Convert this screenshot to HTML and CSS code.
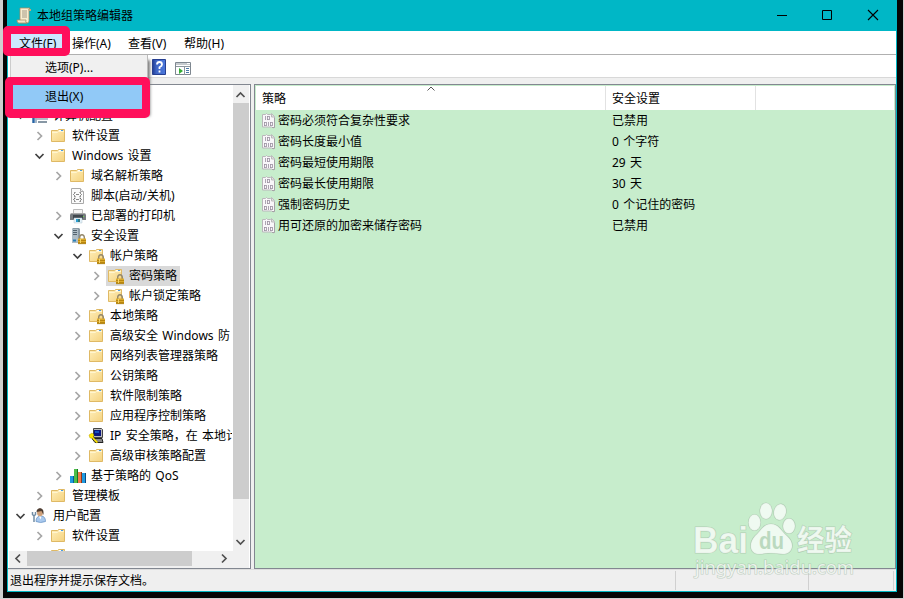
FILE: index.html
```html
<!DOCTYPE html>
<html lang="zh-CN">
<head>
<meta charset="utf-8">
<title>本地组策略编辑器</title>
<link rel="stylesheet" href="styles.css">
</head>
<body>
<svg class="defs" width="0" height="0">
  <defs>
    <linearGradient id="fg" x1="0" y1="0" x2="1" y2="1"><stop offset="0" stop-color="#ffefba"/><stop offset="1" stop-color="#f4d27f"/></linearGradient>
    <linearGradient id="help" x1="0" y1="0" x2="1" y2="0"><stop offset="0" stop-color="#203c94"/><stop offset=".3" stop-color="#3f65c4"/><stop offset="1" stop-color="#4b78dc"/></linearGradient>
    <symbol id="folder" viewBox="0 0 18 18"><path d="M1.500 14.500v-11h6l1-1h6v12z" fill="url(#fg)" stroke="#dfb965"/><path d="M2 5.500h5.500l1-1H14" fill="none" stroke="#fff5d0"/><path d="M9 3.500h4" stroke="#fff"/><path d="M11 3.500h2" stroke="#4a9be0"/></symbol>
    <symbol id="lock" viewBox="0 0 18 18"><path d="M10.700 12v-1.500a2.300 2.800 0 0 1 4.600 0V12" fill="none" stroke="#93876a" stroke-width="1.400"/><path d="M9 11.500h8V17H9z" fill="#dcab2c"/><path d="M9 13.500h8M9 15.500h8" stroke="#b9860f"/><path d="M9 16.700h8" stroke="#8f6a14" stroke-width=".6"/><path d="M11.500 12v4" stroke="#f6d667"/></symbol>
    <symbol id="flock" viewBox="0 0 18 18"><use href="#folder"/><use href="#lock"/></symbol>
    <symbol id="script" viewBox="0 0 18 18"><path d="M2.500 1.500h9l3 3v12h-12z" fill="#fbfbfb" stroke="#aaa"/><path d="M11.500 1.500v3h3" fill="#eee" stroke="#aaa"/><path d="M6.500 5.500h-1v1l-1 1 1 1v1h1M10.500 5.500h1v1l1 1-1 1v1h-1M6.500 11h-1v1l-1 .5 1 1v1h1M10.500 11h1v1l1 .5-1 1v1h-1" fill="none" stroke="#666" stroke-width=".9"/><path d="M7 7.500h3M7 12.500h3" stroke="#888"/></symbol>
    <symbol id="printer" viewBox="0 0 18 18"><path d="M4.500 2.500h9V7h-9z" fill="#f5f5f5" stroke="#bbb"/><path d="M2 6h14l1 2v5H1V8z" fill="#777c80"/><path d="M2 6.500h14" stroke="#aaa"/><path d="M4 8h10v4H4z" fill="#40474d"/><path d="M5 11h8v5H5z" fill="#e4f2fa" stroke="#b5c6cf" stroke-width=".5"/><path d="M7 12h2v3H7z" fill="#2a9dd1"/><path d="M9 12h2v3H9z" fill="#367b83"/><path d="M14 9.500h1" stroke="#69e049"/></symbol>
    <symbol id="server" viewBox="0 0 18 18"><path d="M3 2l1-1h6l1 1v14H3z" fill="#8b9aa5"/><path d="M3 2h6v14H3z" fill="#aebcc5"/><path d="M4 3.500h4M4 5.500h4M4 7.500h4" stroke="#53636e"/><path d="M4 13.500h3" stroke="#277fb8" stroke-width="2"/><use href="#lock"/></symbol>
    <symbol id="qos" viewBox="0 0 18 18"><path d="M1 9h3v7H1z" fill="#1f9ae0"/><path d="M4 9h1v7H4z" fill="#075a9a"/><path d="M5 2h3v14H5z" fill="#4cbd49"/><path d="M8 2h1v14H8z" fill="#167821"/><path d="M9 5h3v11H9z" fill="#f07b4c"/><path d="M12 5h1v11h-1z" fill="#933719"/><path d="M13 6h3v10h-3z" fill="#1f9ae0"/><path d="M16 6h1v10h-1z" fill="#064a83"/></symbol>
    <symbol id="ipsec" viewBox="0 0 18 18"><path d="M5.500 1.500h8l1 1v8h-9z" fill="#bcbcbc" stroke="#444"/><path d="M6 3h7v6H6z" fill="#0b177e"/><path d="M7 5h4" stroke="#268dff"/><path d="M4 11.500h10l1 4H7z" fill="#888" stroke="#222"/><path d="M1 8l3-2 2 2-1 2 5 5-1.500 1L4 11 2 11z" fill="#ffea00" stroke="#b89e00" stroke-width=".5"/></symbol>
    <symbol id="computer" viewBox="0 0 18 18"><path d="M1 5h5v11H1z" fill="#a6b8c9"/><path d="M2.500 8v8" stroke="#2465aa" stroke-width="2"/><path d="M6 4h11v9H6z" fill="#b5bfc9"/><path d="M8 5h8v6H8z" fill="#dce9f3"/><path d="M7 15h9" stroke="#8898a5" stroke-width="2"/></symbol>
    <symbol id="user" viewBox="0 0 18 18"><path d="M5 14.500c0-4 2-5.500 5-5.500s4.500 2 4.500 5.500q-5 2-9.500 0z" fill="#a9c9ee" stroke="#5e8dc0" stroke-width=".7"/><ellipse cx="9" cy="5.500" rx="3" ry="3.800" fill="#cfa17b"/><path d="M5.500 5c0-5 7-5 7 0v3l-2-4z" fill="#4d3d32"/><path d="M1.500 5v2.500L3 9l1.500-1.500V5M3 9v6" fill="none" stroke="#718da5" stroke-width="1.500"/><path d="M8 9.500l1.500 3 1-3" fill="#fff"/></symbol>
    <symbol id="policy" viewBox="0 0 14 16"><path d="M.5 1.500h3l1-1 1 1h3l1-1 3 3V14l-1 1-2-1H.500z" fill="#f8f6f9" stroke="#bab7bb"/><path d="M9.500 1v3h3" fill="#ddd" stroke="#bbb"/><path d="M12.500 5v9.500H10" fill="none" stroke="#a5a2a6"/><g fill="none" stroke="#9990a0" stroke-width=".8"><path d="M3.500 3v4M6.500 9v4"/><rect x="5.500" y="3.400" width="2" height="3.200"/><rect x="2.500" y="9.400" width="2" height="3.200"/><rect x="8.500" y="9.400" width="2" height="3.200"/></g></symbol>
    <symbol id="right" viewBox="0 0 12 12"><path d="M4.500 2l4 4-4 4" fill="none" stroke="#a6a6a6" stroke-width="1.700"/></symbol>
    <symbol id="down" viewBox="0 0 12 12"><path d="M2.500 4l4 4 4-4" fill="none" stroke="#404040" stroke-width="1.700"/></symbol>
  </defs>
</svg>
<div class="window">
  <header class="titlebar">
    <svg class="appicon" viewBox="0 0 16 17"><path d="M4 1h10q-2 1-1 3v10q0 2-2 2H2q2-1 2-3z" fill="#f7edcf" stroke="#a58b62" stroke-width=".8"/><path d="M6 4h5M6 6h5M6 8h5M6 10h5" stroke="#a49a87"/><path d="M1 13h9q-1 3 1 3H3q-2 0-2-3z" fill="#f2e6c6" stroke="#a98f67" stroke-width=".8"/><path d="M13 2h2v2h-2" fill="#c6aa76"/></svg>
    <h1>本地组策略编辑器</h1>
    <svg class="controls" viewBox="0 0 104 12"><path d="M1 6.500h10" stroke="#000"/><path d="M46.500 1.500h9v9h-9z" fill="none" stroke="#000"/><path d="M92 1l10 10M102 1L92 11" fill="none" stroke="#000" stroke-width="1.100"/></svg>
  </header>
  <nav class="menubar"><span class="open">文件(F)</span><span>操作(A)</span><span>查看(V)</span><span>帮助(H)</span></nav>
  <div class="toolbar">
    <svg width="14" height="16" viewBox="0 0 14 16"><path d="M.5.500h13v15H.500z" fill="url(#help)" stroke="#263f91"/><path d="M5 5.500Q5 3 7.500 3T10 5.500Q10 7 7.500 8.300V10M7.500 11.500v2" fill="none" stroke="#fff" stroke-width="1.800"/></svg>
    <svg class="panel-icon" width="16" height="14" viewBox="0 0 16 14"><path d="M.5.500h15v12H.500z" fill="#fff" stroke="#7e8790"/><path d="M1 2h14M1 4.500h14M9.500 5v8" stroke="#8d969e"/><path d="M12 1.500h3" stroke="#fff"/><path d="M4 6l4 3-4 3z" fill="#35ad35"/><path d="M11 6.500h3M11 8.500h3M11 10.500h3" stroke="#4778a8"/></svg>
  </div>
  <main class="panes">
    <section class="left">
      <div class="treewrap">
        <div class="tree">
          <div class="row root"></div>
          <div class="row"><svg class="arrow"><use href="#down"/></svg><svg class="icon"><use href="#computer"/></svg><span>计算机配置</span></div>
          <div class="row l1"><svg class="arrow"><use href="#right"/></svg><svg class="icon"><use href="#folder"/></svg><span>软件设置</span></div>
          <div class="row l1"><svg class="arrow"><use href="#down"/></svg><svg class="icon"><use href="#folder"/></svg><span>Windows 设置</span></div>
          <div class="row l2"><svg class="arrow"><use href="#right"/></svg><svg class="icon"><use href="#folder"/></svg><span>域名解析策略</span></div>
          <div class="row l2"><i class="arrow"></i><svg class="icon"><use href="#script"/></svg><span>脚本(启动/关机)</span></div>
          <div class="row l2"><svg class="arrow"><use href="#right"/></svg><svg class="icon"><use href="#printer"/></svg><span>已部署的打印机</span></div>
          <div class="row l2"><svg class="arrow"><use href="#down"/></svg><svg class="icon"><use href="#server"/></svg><span>安全设置</span></div>
          <div class="row l3"><svg class="arrow"><use href="#down"/></svg><svg class="icon"><use href="#flock"/></svg><span>帐户策略</span></div>
          <div class="row l4 selected"><svg class="arrow"><use href="#right"/></svg><svg class="icon"><use href="#flock"/></svg><span>密码策略</span></div>
          <div class="row l4"><svg class="arrow"><use href="#right"/></svg><svg class="icon"><use href="#flock"/></svg><span>帐户锁定策略</span></div>
          <div class="row l3"><svg class="arrow"><use href="#right"/></svg><svg class="icon"><use href="#flock"/></svg><span>本地策略</span></div>
          <div class="row l3"><svg class="arrow"><use href="#right"/></svg><svg class="icon"><use href="#folder"/></svg><span>高级安全 Windows 防</span></div>
          <div class="row l3"><i class="arrow"></i><svg class="icon"><use href="#folder"/></svg><span>网络列表管理器策略</span></div>
          <div class="row l3"><svg class="arrow"><use href="#right"/></svg><svg class="icon"><use href="#folder"/></svg><span>公钥策略</span></div>
          <div class="row l3"><svg class="arrow"><use href="#right"/></svg><svg class="icon"><use href="#folder"/></svg><span>软件限制策略</span></div>
          <div class="row l3"><svg class="arrow"><use href="#right"/></svg><svg class="icon"><use href="#folder"/></svg><span>应用程序控制策略</span></div>
          <div class="row l3"><svg class="arrow"><use href="#right"/></svg><svg class="icon"><use href="#ipsec"/></svg><span>IP 安全策略，在 本地计</span></div>
          <div class="row l3"><svg class="arrow"><use href="#right"/></svg><svg class="icon"><use href="#folder"/></svg><span>高级审核策略配置</span></div>
          <div class="row l2"><svg class="arrow"><use href="#right"/></svg><svg class="icon"><use href="#qos"/></svg><span>基于策略的 QoS</span></div>
          <div class="row l1"><svg class="arrow"><use href="#right"/></svg><svg class="icon"><use href="#folder"/></svg><span>管理模板</span></div>
          <div class="row"><svg class="arrow"><use href="#down"/></svg><svg class="icon"><use href="#user"/></svg><span>用户配置</span></div>
          <div class="row l1"><svg class="arrow"><use href="#right"/></svg><svg class="icon"><use href="#folder"/></svg><span>软件设置</span></div>
          <div class="row l1"><i class="arrow"></i><svg class="icon"><use href="#folder"/></svg></div>
        </div>
        <div class="vscroll">
          <svg viewBox="0 0 16 18"><path d="M3.500 12l4-4 4 4" class="chev"/></svg>
          <div class="vthumb"></div>
          <svg viewBox="0 0 16 18"><path d="M3.500 7l4 4 4-4" class="chev"/></svg>
        </div>
      </div>
      <div class="hscroll">
        <svg viewBox="0 0 18 16"><path d="M11 3.500l-4 4 4 4" class="chev"/></svg>
        <div class="hthumb"></div>
        <svg viewBox="0 0 18 16"><path d="M8 3.500l4 4-4 4" class="chev"/></svg>
      </div>
    </section>
    <section class="right">
      <div class="head"><span>策略<svg class="sort" viewBox="0 0 8 5"><path d="M.5 4.500L4 1l3.500 3.500" fill="none" stroke="#555"/></svg></span><span>安全设置</span><span></span></div>
      <div class="item"><svg><use href="#policy"/></svg><span>密码必须符合复杂性要求</span><span>已禁用</span></div>
      <div class="item"><svg><use href="#policy"/></svg><span>密码长度最小值</span><span>0 个字符</span></div>
      <div class="item"><svg><use href="#policy"/></svg><span>密码最短使用期限</span><span>29 天</span></div>
      <div class="item"><svg><use href="#policy"/></svg><span>密码最长使用期限</span><span>30 天</span></div>
      <div class="item"><svg><use href="#policy"/></svg><span>强制密码历史</span><span>0 个记住的密码</span></div>
      <div class="item"><svg><use href="#policy"/></svg><span>用可还原的加密来储存密码</span><span>已禁用</span></div>
    </section>
  </main>
  <footer class="status"><span>退出程序并提示保存文档。</span><span></span><span></span></footer>
</div>
<div class="dropdown"><div>选项(P)...</div><div class="hot">退出(X)</div></div>
<div class="mark mark-file"></div>
<div class="mark mark-exit"></div>
<svg class="watermark" width="180" height="90" viewBox="685 495 180 90">
  <g class="wm">
    <text x="693" y="553" class="wm-bai" textLength="55" lengthAdjust="spacingAndGlyphs">Bai</text>
    <ellipse cx="754.500" cy="522.500" rx="6" ry="8"/><ellipse cx="766" cy="511" rx="6" ry="8"/><ellipse cx="780" cy="512" rx="6" ry="8" transform="rotate(12 780 512)"/><ellipse cx="789" cy="526" rx="6" ry="7.500"/>
    <path d="M771 524c8 0 10 7 16 12 9 8 5 18-4 18-5 0-7-1-12-1s-7 1-12 1c-9 0-11-10-4-18 6-5 8-12 16-12z"/>
    <text x="797" y="551" class="wm-cn" textLength="55" lengthAdjust="spacingAndGlyphs">经验</text>
    <text x="695" y="574" class="wm-url" textLength="159" lengthAdjust="spacingAndGlyphs">jingyan.baidu.com</text>
  </g>
  <text x="759" y="549" class="wm-du" textLength="25" lengthAdjust="spacingAndGlyphs">du</text>
</svg>
</body>
</html>
```

FILE: styles.css
```css
* { box-sizing: border-box; }
body {
  margin: 0;
  width: 904px;
  height: 599px;
  overflow: hidden;
  position: relative;
  background: #cfcfcf;
  padding: 0 1px 1px 3px;
  font: 12px/20px "Noto Sans", "Noto Sans CJK SC", sans-serif;
  word-spacing: 1.2px;
  color: #000;
}
.defs { position: absolute; }
svg { display: block; flex: none; }
.window {
  width: 900px;
  height: 598px;
  background: #efefef;
  border: solid #050505;
  border-width: 0 6px 6px 4px;
  box-shadow: inset 1px 0 #00b7c3, inset -1px -1px #00b7c3;
  padding: 0 1px 1px;
  display: flex;
  flex-direction: column;
}
.titlebar {
  height: 31px;
  margin: 0 -1px;
  flex: none;
  background: #00b7c6;
  display: flex;
  align-items: center;
  padding: 0 17px 0 9px;
}
.titlebar h1 { margin: 0 auto 0 5px; font-size: 12px; font-weight: 400; }
.appicon { width: 16px; height: 17px; }
.controls { width: 104px; height: 12px; margin-bottom: 1px; }
.menubar {
  height: 24px;
  flex: none;
  background: #fff;
  border-bottom: 1px solid #b0b0b0;
  display: flex;
  padding-left: 3px;
  line-height: 25px;
}
.menubar span { width: 56px; padding-left: 8px; white-space: nowrap; }
.menubar .open { width: 53px; background: #cce8ff; }
.toolbar {
  height: 23px;
  flex: none;
  background: #fff;
  border-bottom: 1px solid #d8d8d8;
  display: flex;
  gap: 9px;
  align-items: center;
  padding: 2px 0 0 144px;
}
.panel-icon { margin-top: 3px; }
.panes { display: flex; gap: 3px; height: 485px; margin-top: 6px; flex: none; }
.left {
  width: 243px;
  background: #fff;
  border: 1px solid #828790;
  border-left: 0;
  padding-right: 1px;
  display: flex;
  flex-direction: column;
}
.treewrap { display: flex; height: 466px; }
.tree { width: 225px; padding-right: 1px; overflow: hidden; }
.row { height: 20px; display: flex; align-items: center; padding-left: 6px; white-space: nowrap; overflow: hidden; }
.row.root { height: 21px; }
.row.l1 { padding-left: 25px; }
.row.l2 { padding-left: 44px; }
.row.l3 { padding-left: 63px; }
.row.l4 { padding-left: 82px; }
.arrow { width: 12px; height: 12px; margin-right: 5px; flex: none; }
.icon { width: 18px; height: 18px; margin-right: 1px; }
.row span { height: 20px; padding: 0 3px; }
.selected .icon { background: #d9d9d9; box-shadow: 0 0 0 1px #d9d9d9; }
.selected span { background: #d9d9d9; }
.vscroll { width: 16px; background: #f0f0f0; }
.vscroll svg { width: 16px; height: 18px; }
.vthumb { height: 396px; background: #cdcdcd; margin-bottom: 34px; }
.hscroll { display: flex; height: 17px; background: #f0f0f0; margin-left: 1px; padding-right: 17px; justify-content: space-between; }
.hscroll svg { width: 18px; height: 16px; }
.hthumb { width: 165px; height: 15px; background: #cdcdcd; margin-right: auto; }
.chev { fill: none; stroke: #505050; stroke-width: 1.7; }
.right { width: 642px; background: #c7edcc; border: 1px solid #828790; padding-top: 1px; }
.head { height: 24px; margin: 0 1px; background: #fff; display: flex; line-height: 25px; }
.head span { width: 150px; border-right: 1px solid #e2e2e2; padding-left: 6px; }
.head span:first-child { width: 350px; position: relative; }
.head span:last-child { width: auto; border: 0; }
.sort { position: absolute; left: 171px; top: 0; width: 8px; height: 5px; }
.item { height: 21px; display: flex; align-items: center; padding-left: 7px; }
.item svg { width: 14px; height: 16px; }
.item span:nth-child(2) { width: 336px; padding-left: 2px; }
.status { height: 22px; display: flex; border-top: 1px solid #dedede; }
.status span { flex: none; margin: 1px 0 1px; border-right: 1px solid #d0d0d0; line-height: 20px; width: 133px; }
.status span:first-child { width: 668px; padding-left: 2px; }
.status span:last-child { width: 85px; }
.dropdown {
  position: absolute;
  left: 10px;
  top: 55px;
  width: 138px;
  height: 58px;
  background: #f0f0f0;
  border-left: 1px solid #ccc;
  border-right: 1px solid #bbb;
  box-shadow: 3px 4px 3px -1px #777;
  padding: 1px 2px;
}
.dropdown div { height: 24px; line-height: 24px; padding-left: 32px; }
.dropdown .hot { margin-top: 5px; height: 25px; background: #91c9f7; }
.mark { position: absolute; border: 8px solid #ff0f5b; border-radius: 5px; }
.mark-file { left: 3px; top: 26px; width: 67px; height: 30px; }
.mark-exit { left: 5px; top: 77px; width: 145px; height: 41px; border-bottom-width: 9px; }
.watermark { position: absolute; left: 685px; top: 495px; }
.wm { fill: #fff; fill-opacity: .72; stroke: #a0b8a3; stroke-width: 1.2; stroke-opacity: .6; paint-order: stroke; }
.wm-bai { font: 700 36px "Liberation Sans", sans-serif; }
.wm-cn { font: 700 29px "Noto Sans CJK SC", sans-serif; }
.wm-url { font: 18px "Noto Sans", sans-serif; }
.wm-du { font: 700 23px "Liberation Sans", sans-serif; fill: #bbd9bf; }
```
